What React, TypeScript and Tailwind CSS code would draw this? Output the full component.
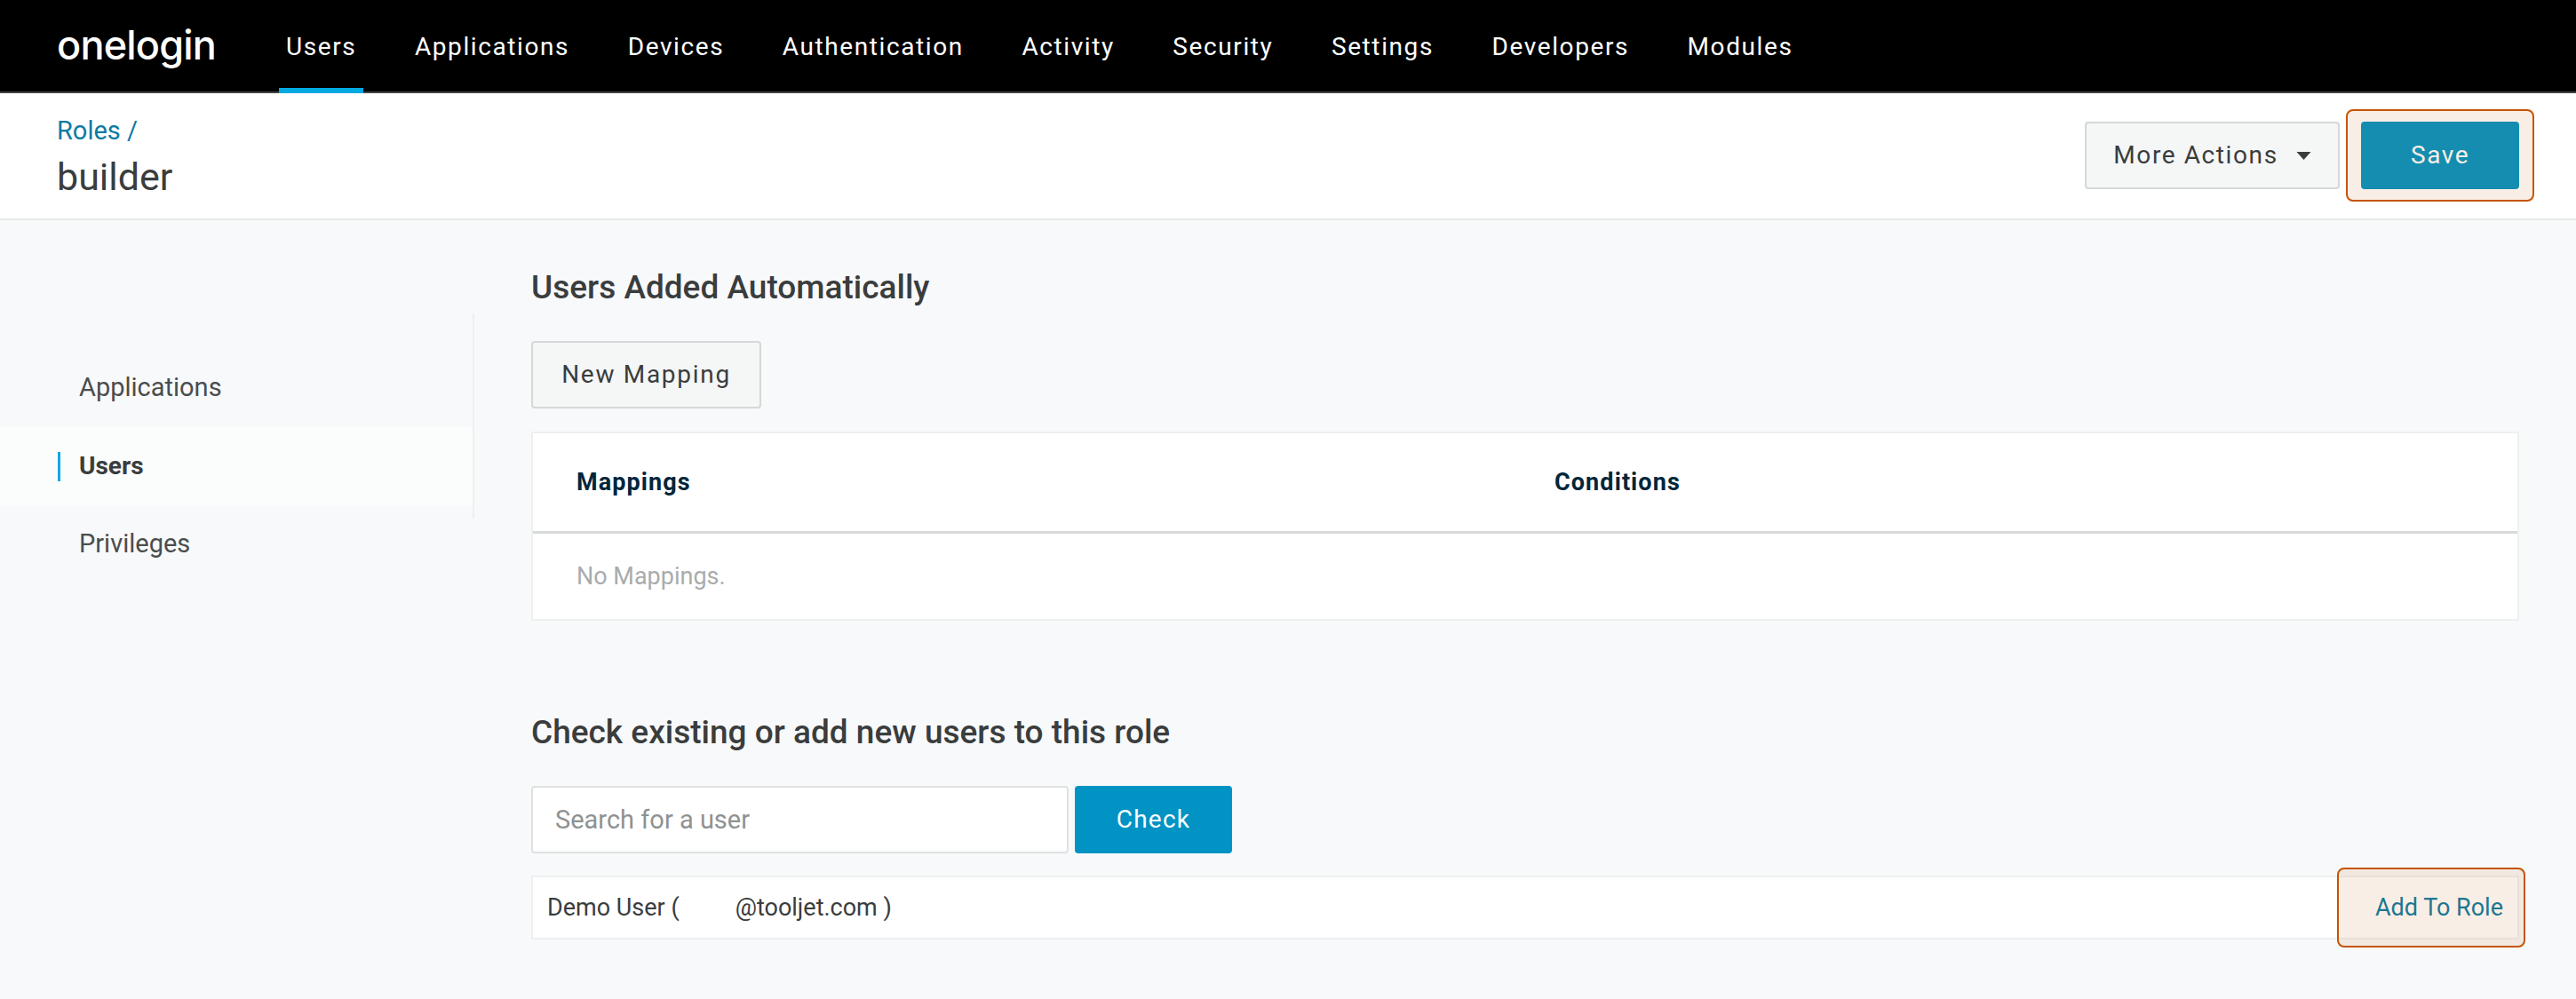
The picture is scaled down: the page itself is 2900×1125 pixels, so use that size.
import React from "react";

const navItems = ["Users", "Applications", "Devices", "Authentication", "Activity", "Security", "Settings", "Developers", "Modules"];
const sideItems = ["Applications", "Users", "Privileges"];

function Highlight({ className }: { className: string }) {
  return (
    <div
      className={`absolute pointer-events-none rounded-[8px] border-2 border-[#c55400] bg-[#c554001a] ${className}`}
    />
  );
}

export default function App() {
  return (
    <div className="min-h-screen overflow-hidden bg-[#f8f9fb] font-['Roboto',sans-serif] text-[#3a3d3d]">
      <nav className="flex h-[105px] items-stretch border-b-2 border-[#444] bg-black pl-[64px] text-white">
        <div className="mr-[72px] flex w-[178px] items-center whitespace-nowrap pb-[3px] font-['Inter',sans-serif] text-[45px] font-medium leading-none tracking-[-0.8px]">
          onelogin
        </div>
        <ul className="flex items-stretch gap-[49.5px]">
          {navItems.map((item, idx) => (
            <li
              key={item}
              className={`-mb-[2px] flex items-center px-[8px] text-[28px] tracking-[1.6px] ${
                idx === 0 ? "border-b-[6px] border-[#00a9e0] pt-[6px]" : ""
              }`}
            >
              {item}
            </li>
          ))}
        </ul>
      </nav>

      <header className="flex h-[143px] items-start justify-between border-b-2 border-[#e6e8e8] bg-white pl-[64px] pr-[64px]">
        <div>
          <div className="mt-[24px] text-[29px] leading-[36px] text-[#0a7ba3]">Roles /</div>
          <h1 className="mt-[8px] text-[43px] leading-[52px]">builder</h1>
        </div>
        <div className="mt-[32px] flex gap-[24px]">
          <button className="flex h-[76px] w-[287px] items-center justify-center gap-[20px] rounded-[4px] border-2 border-[#d5d8d8] bg-[#f5f6f6] text-[28px] tracking-[1.6px]">
            More Actions
            <svg viewBox="0 0 16 9" className="h-[9px] w-[17px] fill-[#3a3d3d]">
              <polygon points="0,0 16,0 8,9" />
            </svg>
          </button>
          <div className="relative">
            <button className="h-[76px] w-[178px] rounded-[4px] bg-[#0093c4] text-[28px] tracking-[1.55px] text-white">
              Save
            </button>
            <Highlight className="-inset-y-[14px] -left-[17px] -right-[17px]" />
          </div>
        </div>
      </header>

      <main className="flex">
        <aside className="mt-[105px] w-[534px] shrink-0">
          <ul className="h-[231px] border-r-2 border-[#eef0f0] pt-[40px] text-[29px]">
            {sideItems.map((item) => (
              <li
                key={item}
                className={`flex h-[88px] items-center pl-[65px] ${
                  item === "Users" ? "bg-[#fbfcfc] text-[28px] font-bold" : "text-[#4a4d4d]"
                }`}
              >
                <span className={`mr-[21px] h-[33px] w-[3px] ${item === "Users" ? "bg-[#00a9e0]" : ""}`} />
                {item}
              </li>
            ))}
          </ul>
        </aside>

        <section className="ml-[64px] w-[2238px]">
          <h2 className="mt-[53px] text-[37px] font-medium leading-[46px]">Users Added Automatically</h2>
          <button className="mt-[37px] h-[76px] w-[259px] rounded-[4px] border-2 border-[#d5d8d8] bg-[#f5f6f6] text-[28px] tracking-[1.7px]">
            New Mapping
          </button>

          <div className="mt-[26px] border-2 border-[#eef0f0] bg-white">
            <div className="flex h-[113px] items-center border-b-[3px] border-[#d8dada] pl-[49px] text-[27px] font-bold tracking-[1.1px] text-[#03263b]">
              <span className="w-[1101px]">Mappings</span>
              <span>Conditions</span>
            </div>
            <div className="flex h-[96px] items-center pl-[49px] text-[27px] text-[#a9acac]">No Mappings.</div>
          </div>

          <h2 className="mt-[103px] text-[37px] font-medium leading-[46px]">Check existing or add new users to this role</h2>
          <div className="mt-[37px] flex gap-[7px]">
            <input
              placeholder="Search for a user"
              className="h-[76px] w-[605px] rounded-[4px] border-2 border-[#dfe1e1] bg-white px-[25px] text-[29px] placeholder:text-[#8f9292] outline-none"
            />
            <button className="h-[76px] w-[177px] rounded-[4px] bg-[#0093c4] text-[28px] tracking-[1.2px] text-white">
              Check
            </button>
          </div>

          <div className="mt-[25px] flex h-[72px] items-center justify-between border-2 border-[#eef0f0] bg-white pl-[16px] pr-[16px] text-[27px] leading-[40px]">
            <span className="whitespace-pre">
              Demo User (<span className="ml-[63px]">@tooljet.com )</span>
            </span>
            <div className="relative">
              <span className="text-[#0a7ba3]">Add To Role</span>
              <Highlight className="-inset-y-[25px] -left-[43px] -right-[25px]" />
            </div>
          </div>
        </section>
      </main>
    </div>
  );
}
